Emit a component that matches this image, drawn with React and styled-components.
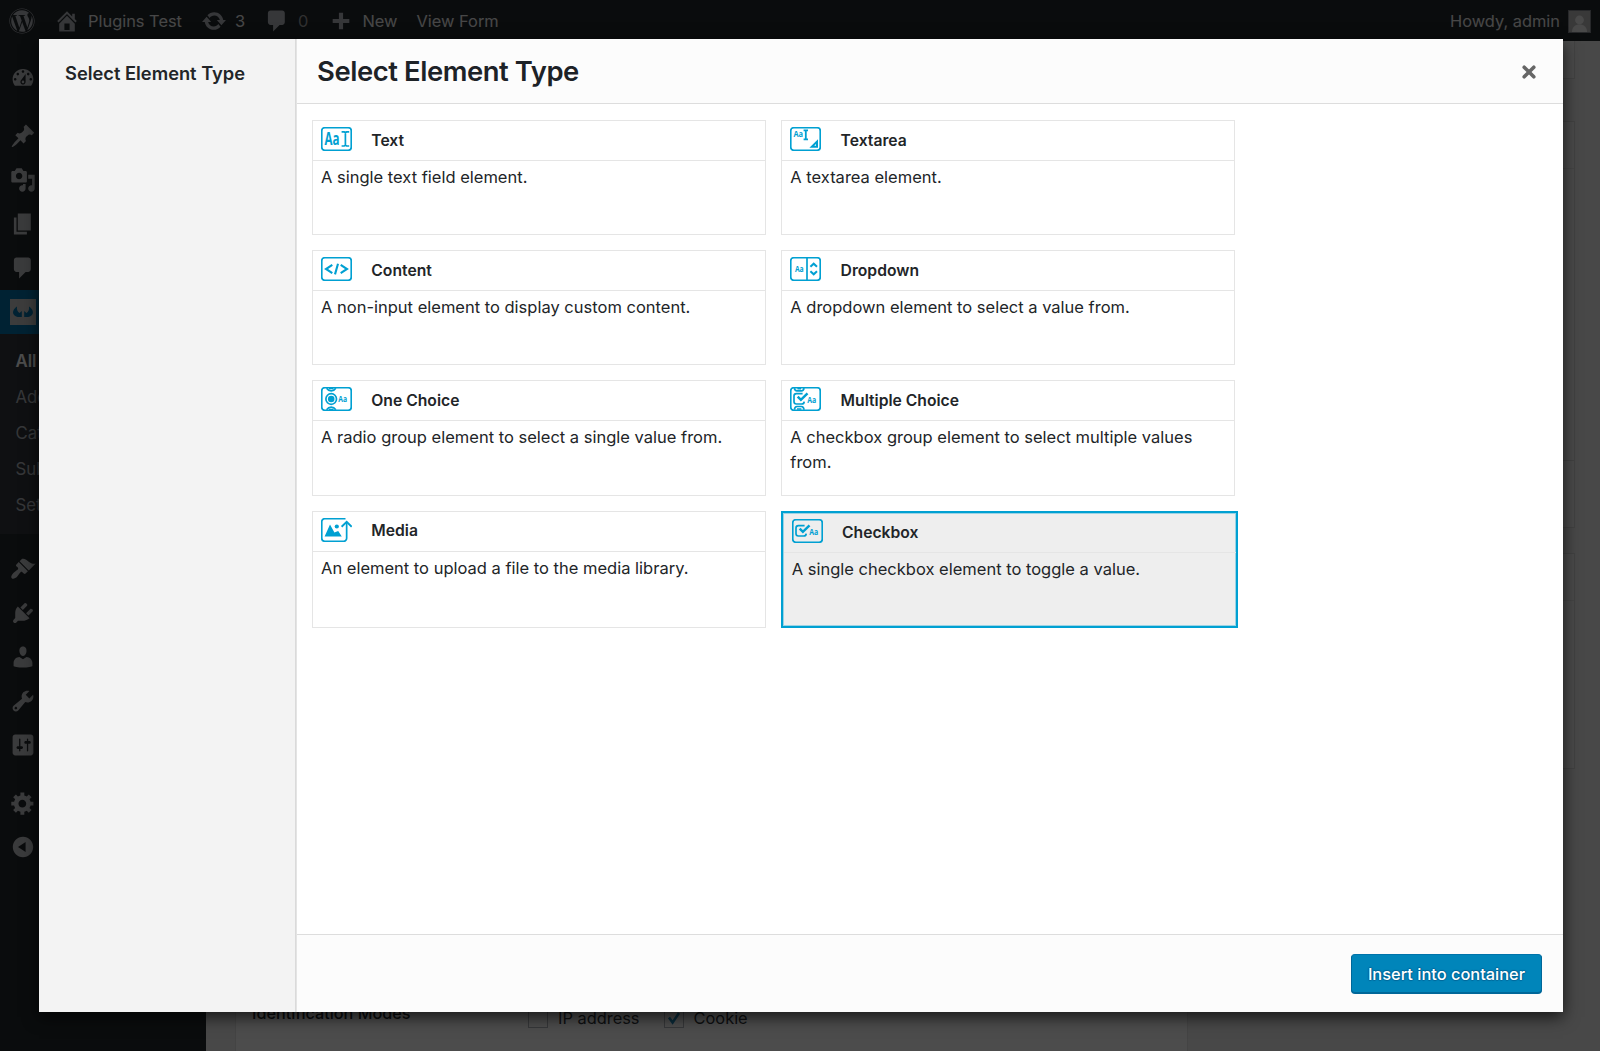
import React from "react";
import styled, { createGlobalStyle, css } from "styled-components";
import { FaWordpress } from "react-icons/fa";

const Global = createGlobalStyle`
  *, *::before, *::after { box-sizing: border-box; }
  html, body { margin: 0; padding: 0; height: 100%; overflow: hidden; }
  body {
    background: #f1f1f1;
    font-family: Inter, "Liberation Sans", sans-serif;
    font-size: 16.4px;
    color: #222528;
  }
`;

const dashicons = {
  home: "M16 8.5l1.53 1.53-1.06 1.06L10 4.6l-6.47 6.49-1.06-1.06L10 2.5l4 4v-2h2v4zm-6-2.46l6 5.99V18H4v-5.97zM12 17v-5H8v5h4z",
  update: "M10.2 3.28c3.53 0 6.43 2.61 6.92 6h2.08l-3.5 4-3.5-4h2.32c-.45-1.97-2.21-3.45-4.32-3.45-1.45 0-2.73.71-3.54 1.78L4.95 5.66C6.23 4.2 8.11 3.28 10.2 3.28zm-.4 13.44c-3.52 0-6.43-2.61-6.92-6H.8l3.5-4c1.17 1.33 2.33 2.67 3.5 4H5.48c.45 1.97 2.21 3.45 4.32 3.45 1.45 0 2.73-.71 3.54-1.78l1.71 1.95c-1.28 1.46-3.15 2.38-5.25 2.38z",
  comments: "M5 2h9c1.1 0 2 .9 2 2v7c0 1.1-.9 2-2 2h-2l-5 5v-5H5c-1.1 0-2-.9-2-2V4c0-1.1.9-2 2-2z",
  plus: "M8.4 3.6h3.2v4.8h4.8v3.2h-4.8v4.8H8.4v-4.8H3.6V8.4h4.8z",
  dashboard: "M3.76 16h12.48c1.1-1.37 1.76-3.11 1.76-5 0-4.42-3.58-8-8-8s-8 3.58-8 8c0 1.89.66 3.63 1.76 5zM10 4c.55 0 1 .45 1 1s-.45 1-1 1-1-.45-1-1 .45-1 1-1zM6 6c.55 0 1 .45 1 1s-.45 1-1 1-1-.45-1-1 .45-1 1-1zm8 0c.55 0 1 .45 1 1s-.45 1-1 1-1-.45-1-1 .45-1 1-1zm-5.37 5.55L12 7v6c0 1.1-.9 2-2 2s-2-.9-2-2c0-.57.24-1.08.63-1.45zM4 10c.55 0 1 .45 1 1s-.45 1-1 1-1-.45-1-1 .45-1 1-1zm12 0c.55 0 1 .45 1 1s-.45 1-1 1-1-.45-1-1 .45-1 1-1zm-5 3c0-.55-.45-1-1-1s-1 .45-1 1 .45 1 1 1 1-.45 1-1z",
  post: "M10.44 3.02l1.82-1.82 6.36 6.35-1.83 1.82c-1.05-.68-2.48-.57-3.41.36l-.75.75c-.92.93-1.04 2.35-.35 3.41l-1.83 1.82-2.41-2.41-2.8 2.79c-.42.42-3.38 2.71-3.8 2.29s1.86-3.39 2.28-3.81l2.79-2.79L4.1 9.36l1.83-1.82c1.05.69 2.48.57 3.4-.36l.75-.75c.93-.92 1.05-2.35.36-3.41z",
  media: "M13 11V4c0-.55-.45-1-1-1h-1.67L9 1H5L3.67 3H2c-.55 0-1 .45-1 1v7c0 .55.45 1 1 1h10c.55 0 1-.45 1-1zM7 4.5c1.38 0 2.5 1.12 2.5 2.5S8.38 9.5 7 9.5 4.5 8.38 4.5 7 5.62 4.5 7 4.5zM14 6h5v10.5c0 1.38-1.12 2.5-2.5 2.5S14 17.88 14 16.5s1.12-2.5 2.5-2.5c.17 0 .34.02.5.05V9h-3V6zm-4 8.05V13h2v3.5c0 1.38-1.12 2.5-2.5 2.5S7 17.88 7 16.5 8.12 14 9.5 14c.17 0 .34.02.5.05z",
  page: "M6 15V2h10v13H6zm-1 1h8v2H3V5h2v11z",
  appearance: "M14.48 11.06L7.41 3.99l1.5-1.5c.5-.56 2.3-.47 3.51.32 1.21.8 1.43 1.28 2.91 2.1 1.18.64 2.45 1.26 4.45.85zm-.71.71L6.7 4.7 4.93 6.47c-.39.39-.39 1.02 0 1.41l1.06 1.06c.39.39.39 1.03 0 1.42-.6.6-1.43 1.11-2.21 1.69-.35.26-.7.53-1.01.84C1.43 14.23.4 16.08 1.4 17.07c.99 1 2.84-.03 4.18-1.36.31-.31.58-.66.85-1.02.57-.78 1.08-1.61 1.69-2.21.39-.39 1.02-.39 1.41 0l1.06 1.06c.39.39 1.02.39 1.41 0z",
  plugins: "M13.11 4.36L9.87 7.6 8 5.73l3.24-3.24c.35-.34 1.05-.2 1.56.32.52.51.66 1.21.31 1.55zm-8 1.77l.91-1.12 9.01 9.01-1.19.84c-.71.71-2.63 1.16-3.82 1.16H6.14L4.9 17.26c-.59.59-1.54.59-2.12 0-.59-.58-.59-1.53 0-2.12l1.24-1.24v-3.88c0-1.13.4-3.19 1.09-3.89zm7.26 3.97l3.24-3.24c.34-.35 1.04-.21 1.55.31.52.51.66 1.21.31 1.55l-3.24 3.25z",
  users: "M10 9.25c-2.27 0-2.73-3.44-2.73-3.44C7 4.02 7.82 2 9.97 2c2.16 0 2.98 2.02 2.71 3.81 0 0-.41 3.44-2.68 3.44zm0 2.57L12.72 10c2.39 0 4.52 2.33 4.52 4.53v2.49s-3.65 1.13-7.24 1.13c-3.65 0-7.24-1.13-7.24-1.13v-2.49c0-2.25 1.94-4.48 4.47-4.48z",
  tools: "M16.68 9.77c-1.34 1.34-3.3 1.67-4.95.99l-5.41 6.52c-.99.99-2.59.99-3.58 0s-.99-2.59 0-3.57l6.52-5.42c-.68-1.65-.35-3.61.99-4.95 1.28-1.28 3.12-1.62 4.72-1.06l-2.89 2.89 2.82 2.82 2.86-2.87c.53 1.58.18 3.39-1.08 4.65zM3.81 16.21c.4.39 1.04.39 1.43 0 .4-.4.4-1.04 0-1.43-.39-.4-1.03-.4-1.43 0-.39.39-.39 1.03 0 1.43z",
  settings: "M18 16V4c0-1.1-.9-2-2-2H4c-1.1 0-2 .9-2 2v12c0 1.1.9 2 2 2h12c1.1 0 2-.9 2-2zM8 11h1c.55 0 1 .45 1 1s-.45 1-1 1H8v1.5c0 .28-.22.5-.5.5s-.5-.22-.5-.5V13H6c-.55 0-1-.45-1-1s.45-1 1-1h1V5.5c0-.28.22-.5.5-.5s.5.22.5.5V11zm5-2h-1c-.55 0-1-.45-1-1s.45-1 1-1h1V5.5c0-.28.22-.5.5-.5s.5.22.5.5V7h1c.55 0 1 .45 1 1s-.45 1-1 1h-1v5.5c0 .28-.22.5-.5.5s-.5-.22-.5-.5V9z",
  generic: "M18 12h-2.18c-.17.7-.44 1.35-.81 1.93l1.54 1.54-2.1 2.1-1.54-1.54c-.58.36-1.23.63-1.91.79V19H8v-2.18c-.68-.16-1.33-.43-1.91-.79l-1.54 1.54-2.12-2.12 1.54-1.54c-.36-.58-.63-1.23-.79-1.91H1V9.03h2.17c.16-.7.44-1.35.8-1.94L2.43 5.55l2.1-2.1 1.54 1.54c.58-.37 1.24-.64 1.93-.81V2h3v2.18c.68.16 1.33.43 1.91.79l1.54-1.54 2.12 2.12-1.54 1.54c.36.59.64 1.24.8 1.94H18V12zm-8.5 1.5c1.66 0 3-1.34 3-3s-1.34-3-3-3-3 1.34-3 3 1.34 3 3 3z",
  collapse: "M10 2.16c4.33 0 7.84 3.51 7.84 7.84s-3.51 7.84-7.84 7.84S2.16 14.33 2.16 10 5.67 2.16 10 2.16zm2 11.72V6.12L6.18 9.97z",
};

const Dashicon = ({ name, size = 26 }) => (
  <svg width={size} height={size} viewBox="0 0 20 20" fill="currentColor" fillRule="evenodd">
    <path d={dashicons[name]} />
  </svg>
);

/* ---------- Admin page behind the modal ---------- */

const Page = styled.div`
  position: relative;
  width: 1600px;
  height: 1051px;
  overflow: hidden;
  display: grid;
  grid-template: 41px 1fr / 206px 1fr;
  background: #f1f1f1;
`;

const AdminBar = styled.header`
  grid-column: 1 / -1;
  display: flex;
  align-items: center;
  padding: 1px 9px 0;
  background: #23282d;
  color: #eee;
`;

const BarItem = styled.div`
  display: flex;
  align-items: center;
  height: 40px;
  margin-left: ${(p) => p.$gap || 0}px;
  gap: ${(p) => p.$inner ?? 8}px;
  white-space: nowrap;

  svg { flex: none; color: #b4b9be; }
`;

const BarCount = styled.span`
  color: ${(p) => (p.$muted ? "#a0a0a0" : "#eee")};
`;

const Spacer = styled.div`
  flex: 1;
`;

const Avatar = styled.div`
  width: 23px;
  height: 23px;
  display: flex;
  align-items: flex-end;
  justify-content: center;
  border: 1px solid #82878c;
  background: #c0c0c0;
`;

const Menu = styled.nav`
  display: flex;
  flex-direction: column;
  padding-top: 15px;
  background: #23282d;
`;

const MenuRow = styled.div`
  display: flex;
  align-items: center;
  height: 44px;
  padding-left: 10px;
  margin-top: ${(p) => p.$gap || 0}px;
  color: #c4c6c8;
  ${(p) => p.$current && css`
    background: #0073aa;
    color: #fff;
  `}
`;

const SubMenu = styled.div`
  display: flex;
  flex-direction: column;
  height: 200px;
  padding: 9px 0 0 15.5px;
  background: #32373c;
`;

const SubItem = styled.div`
  height: 36.1px;
  line-height: 36px;
  font-size: 16.8px;
  color: ${(p) => (p.$current ? "#fff" : "#b4b9be")};
  font-weight: ${(p) => (p.$current ? 600 : 400)};
  white-space: nowrap;
`;

const Main = styled.main`
  display: grid;
  grid-template-columns: 953px 1fr;
  gap: 20px;
  padding: 0 25px 0 29px;
`;

const SideColumn = styled.div`
  display: flex;
  flex-direction: column;
`;

const Postbox = styled.section`
  height: ${(p) => p.$h}px;
  margin-top: ${(p) => p.$gap || 0}px;
  border: 1px solid #dcdcdc;
  border-top-width: ${(p) => (p.$joined ? 0 : 1)}px;
  background: #f8f8f8;
`;

const PostboxHead = styled.div`
  height: 47px;
  border-bottom: 1px solid #e6e6e6;
`;

const SettingsPanel = styled.section`
  display: flex;
  align-items: flex-start;
  padding: 960px 0 0 16px;
  border: solid #e5e5e5;
  border-width: 0 1px;
  background: #fff;
`;

const SettingLabel = styled.div`
  width: 276px;
  margin-top: 2px;
  font-weight: 500;
  font-size: 16.2px;
  color: #23282d;
`;

const CheckOption = styled.label`
  display: flex;
  align-items: center;
  gap: 10px;
  margin: 7px 24px 0 0;
  color: #32373c;
`;

const CheckSquare = styled.span`
  display: flex;
  width: 20px;
  height: 20px;
  border: 1px solid #b4b9be;
  color: #1e8cbe;
`;

const Backdrop = styled.div`
  position: absolute;
  inset: 0;
  background: rgba(0, 0, 0, 0.7);
`;

/* ---------- Modal ---------- */

const Modal = styled.div`
  position: absolute;
  inset: 39px 37px 39px 39px;
  display: grid;
  grid-template: minmax(0, 1fr) / 257px 1fr;
  background: #fcfcfc;
  box-shadow: 0 5px 15px rgba(0, 0, 0, 0.7);
`;

const ModalMenu = styled.aside`
  padding: 22px 26px;
  background: #f3f3f3;
  border-right: 1px solid #dadada;
  box-shadow: 1px 0 0 #e4e4e4;
`;

const MenuTitle = styled.h2`
  margin: 0;
  font-size: 18.3px;
  line-height: 24px;
  font-weight: 600;
  white-space: nowrap;
`;

const ModalBody = styled.div`
  display: flex;
  flex-direction: column;
  min-width: 0;
  margin-left: 1px;
`;

const ModalHeader = styled.header`
  display: flex;
  align-items: center;
  justify-content: space-between;
  height: 65px;
  padding: 0 27px 0 20px;
  border-bottom: 1px solid #ddd;
`;

const ModalTitle = styled.h1`
  margin: 0;
  font-size: 27.4px;
  line-height: 36px;
  font-weight: 600;
  letter-spacing: -0.42px;
  color: #1d2227;
`;

const CloseButton = styled.button`
  display: flex;
  margin-top: 2px;
  padding: 0;
  border: 0;
  background: none;
  color: #666;
`;

const ModalContent = styled.div`
  flex: 1;
  padding: 16px 15px;
  background: #fff;
`;

const CardGrid = styled.div`
  display: grid;
  grid-template-columns: 454px 454px;
  grid-template-rows: repeat(3, 115.2px) 117px;
  gap: 15px 15.3px;
`;

const Card = styled.article`
  display: flex;
  flex-direction: column;
  border: 1px solid #e5e5e5;
  background: #fff;
  ${(p) => p.$selected && css`
    width: 457px;
    padding: 0.4px;
    border: 2px solid #00a0d2;
    box-shadow: inset 0 0 0 1px rgba(0, 160, 210, 0.35);
    background: #eee;
  `}
`;

const CardHead = styled.div`
  display: flex;
  align-items: center;
  gap: 19.3px;
  height: 40px;
  padding: 0 8px 3px;
  border-bottom: 1px solid #e5e5e5;
`;

const CardTitle = styled.h3`
  margin: 3.4px 0 0;
  font-size: 15.7px;
  line-height: 22px;
  font-weight: 600;
`;

const CardText = styled.p`
  margin: 0;
  padding: 4px 8px;
  font-size: 16.5px;
  line-height: 24.5px;
`;

const ModalFooter = styled.footer`
  display: flex;
  align-items: center;
  justify-content: flex-end;
  height: 78px;
  padding: 0 21px 0 0;
  border-top: 1px solid #ddd;
`;

const PrimaryButton = styled.button`
  width: 191px;
  height: 39px;
  padding: 0;
  border: 1px solid #0073aa;
  border-color: #0073aa #006799 #006799;
  border-radius: 4px;
  background: #0085ba;
  box-shadow: 0 1px 0 #006799;
  color: #fff;
  font: 500 16.4px Inter, "Liberation Sans", sans-serif;
  text-shadow: 0 -1px 1px #006799, 1px 0 1px #006799, 0 1px 1px #006799, -1px 0 1px #006799;
`;

/* ---------- Element type glyphs ---------- */

const GlyphText = styled.text`
  font-family: "Open Sans", "Noto Sans", sans-serif;
  font-weight: 700;
  fill: #00a0d2;
  stroke: none;
`;

const Aa = ({ x, y, size, width }) => (
  <GlyphText x={x} y={y} fontSize={size} textLength={width} lengthAdjust="spacingAndGlyphs">Aa</GlyphText>
);

const Frame = () => <rect x="0.75" y="0.75" width="29.5" height="22.5" rx="3" />;

const CheckMark = () => (
  <>
    <path d="M12.6 6.6H6.4a2.4 2.4 0 0 0-2.4 2.4v5.6A2.4 2.4 0 0 0 6.4 17h5.2a2.6 2.6 0 0 0 2.6-2.4" />
    <path d="M7.7 9.6l3.2 3.2 6.6-6.4" strokeWidth="2.5" />
  </>
);

const glyphs = {
  text: (
    <>
      <Frame />
      <Aa x="3.6" y="18.2" size="17" width="15" />
      <path d="M20.6 4.9h2.6l1.2.7 1.2-.7h2.6M24.4 5.4v13M20.6 19h2.6l1.2-.7 1.2.7h2.6" />
    </>
  ),
  textarea: (
    <>
      <Frame />
      <Aa x="3.5" y="10.4" size="8.4" width="9.6" />
      <path d="M13.6 3.4h4.4M15.8 3.4v9M13.6 12.4h4.4" strokeWidth="1.8" />
      <path d="M27 14.6v5.2h-5.2z" strokeWidth="2" />
    </>
  ),
  content: (
    <>
      <Frame />
      <path d="M11.3 7.9L5 12l6.3 4.1M19.7 7.9L26 12l-6.3 4.1M17 6.8L14 17.4" strokeWidth="2.1" />
    </>
  ),
  dropdown: (
    <>
      <Frame />
      <path d="M17 1v22" />
      <path d="M20.4 9.8l3.3-3.1 3.3 3.1M20.4 14.2l3.3 3.1 3.3-3.1" strokeWidth="2" />
      <Aa x="4.9" y="15.4" size="9" width="8.8" />
    </>
  ),
  radio: (
    <>
      <Frame />
      <circle cx="10.2" cy="12" r="5.3" />
      <circle cx="10.2" cy="12" r="3.3" fill="#00a0d2" stroke="none" />
      <path d="M5.6 1.2c1.2 1.8 2.8 2.7 4.6 2.7s3.4-.9 4.6-2.7M5.6 22.8c1.2-1.8 2.8-2.7 4.6-2.7s3.4.9 4.6 2.7M8 1.4h4.4M8 22.6h4.4" />
      <Aa x="17.3" y="15" size="9" width="8.8" />
    </>
  ),
  checks: (
    <>
      <Frame />
      <CheckMark />
      <path d="M4.4 1.2c.2 1.8 1.2 2.7 2.6 2.7h4.4c1.4 0 2.4-.9 2.6-2.7M4.4 22.8c.2-2.4 1.2-3.3 2.6-3.3h4.4c1.4 0 2.4.9 2.6 3.3M7.4 1.6h3.6M7 22h4.4" />
      <Aa x="17.2" y="15.9" size="9" width="9" />
    </>
  ),
  checkbox: (
    <>
      <Frame />
      <CheckMark />
      <Aa x="17.2" y="15.9" size="9" width="9" />
    </>
  ),
  media: (
    <>
      <path d="M24.5.75H3.75a3 3 0 0 0-3 3v16.5a3 3 0 0 0 3 3h18.9a3 3 0 0 0 3-3V4" />
      <path d="M20.6 8.7l5.1-4.9 5 4.9" strokeWidth="1.9" />
      <path d="M3.6 18.6L9 6.6l4.4 8 3.8-1.6 3.6 5.6z" fill="#00a0d2" stroke="none" />
      <circle cx="15.8" cy="8.5" r="2.1" fill="#00a0d2" stroke="none" />
    </>
  ),
};

const ElementGlyph = ({ name }) => (
  <svg width="31" height="24" viewBox="0 0 31 24" fill="none" stroke="#00a0d2" strokeWidth="1.7">
    {glyphs[name]}
  </svg>
);

const elements = [
  { icon: "text", title: "Text", text: "A single text field element." },
  { icon: "textarea", title: "Textarea", text: "A textarea element." },
  { icon: "content", title: "Content", text: "A non-input element to display custom content." },
  { icon: "dropdown", title: "Dropdown", text: "A dropdown element to select a value from." },
  { icon: "radio", title: "One Choice", text: "A radio group element to select a single value from." },
  { icon: "checks", title: "Multiple Choice", text: "A checkbox group element to select multiple values from." },
  { icon: "media", title: "Media", text: "An element to upload a file to the media library." },
  { icon: "checkbox", title: "Checkbox", text: "A single checkbox element to toggle a value.", selected: true },
];

export default function App() {
  return (
    <Page>
      <Global />
      <AdminBar>
        <BarItem><FaWordpress size={26} /></BarItem>
        <BarItem $gap={19}><Dashicon name="home" />Plugins Test</BarItem>
        <BarItem $gap={19} $inner={8}><Dashicon name="update" /><BarCount>3</BarCount></BarItem>
        <BarItem $gap={19} $inner={8}><Dashicon name="comments" /><BarCount $muted>0</BarCount></BarItem>
        <BarItem $gap={20}><Dashicon name="plus" />New</BarItem>
        <BarItem $gap={19}>View Form</BarItem>
        <Spacer />
        <BarItem>
          Howdy, admin
          <Avatar>
            <svg width="17" height="18" viewBox="0 0 17 18" fill="#f4f4f4">
              <circle cx="8.5" cy="6" r="4.4" />
              <path d="M1 18c0-5 3-7.5 7.5-7.5S16 13 16 18z" />
            </svg>
          </Avatar>
        </BarItem>
      </AdminBar>
      <Menu>
        <MenuRow><Dashicon name="dashboard" /></MenuRow>
        <MenuRow $gap={14}><Dashicon name="post" /></MenuRow>
        <MenuRow><Dashicon name="media" /></MenuRow>
        <MenuRow><Dashicon name="page" /></MenuRow>
        <MenuRow><Dashicon name="comments" /></MenuRow>
        <MenuRow $current>
          <svg width="26" height="26" viewBox="0 0 26 26">
            <rect width="26" height="26" fill="#c8c8c8" />
            <path d="M7 7.5c-3 2-4.6 5-3.6 7.5 1.5 3 5 3.3 8.4 3V12L9.6 14C7.6 13 6.500 10.500 7 7.500zM19 7.500c3 2 4.600 5 3.600 7.500-1.500 3-5 3.300-8.400 3V12l2.200 2c2-1 3.100-3.500 2.600-6.500z" fill="#0073aa" />
          </svg>
        </MenuRow>
        <SubMenu>
          <SubItem $current>All Forms</SubItem>
          <SubItem>Add New</SubItem>
          <SubItem>Categories</SubItem>
          <SubItem>Submissions</SubItem>
          <SubItem>Settings</SubItem>
        </SubMenu>
        <MenuRow $gap={13}><Dashicon name="appearance" /></MenuRow>
        <MenuRow><Dashicon name="plugins" /></MenuRow>
        <MenuRow><Dashicon name="users" /></MenuRow>
        <MenuRow><Dashicon name="tools" /></MenuRow>
        <MenuRow><Dashicon name="settings" /></MenuRow>
        <MenuRow $gap={14}><Dashicon name="generic" /></MenuRow>
        <MenuRow><Dashicon name="collapse" /></MenuRow>
      </Menu>
      <Main>
        <SettingsPanel>
          <SettingLabel>Identification Modes</SettingLabel>
          <CheckOption><CheckSquare />IP address</CheckOption>
          <CheckOption>
            <CheckSquare>
              <svg width="18" height="18" viewBox="0 0 18 18" fill="none" stroke="currentColor" strokeWidth="2.6">
                <path d="M4 8.5l3.6 5L14 4" />
              </svg>
            </CheckSquare>
            Cookie
          </CheckOption>
        </SettingsPanel>
        <SideColumn>
          <Postbox $h={38} $joined />
          <Postbox $h={340} $gap={42}><PostboxHead /></Postbox>
          <Postbox $h={67} $joined />
          <Postbox $h={216} $gap={25}><PostboxHead /></Postbox>
        </SideColumn>
      </Main>
      <Backdrop />
      <Modal role="dialog">
        <ModalMenu>
          <MenuTitle>Select Element Type</MenuTitle>
        </ModalMenu>
        <ModalBody>
          <ModalHeader>
            <ModalTitle>Select Element Type</ModalTitle>
            <CloseButton aria-label="Close">
              <svg width="14" height="14" viewBox="0 0 14 14" fill="none" stroke="currentColor" strokeWidth="3.6" strokeLinecap="round">
                <path d="M2.2 2.2l9.6 9.6M11.8 2.2l-9.6 9.6" />
              </svg>
            </CloseButton>
          </ModalHeader>
          <ModalContent>
            <CardGrid>
              {elements.map((el) => (
                <Card key={el.title} $selected={el.selected}>
                  <CardHead>
                    <ElementGlyph name={el.icon} />
                    <CardTitle>{el.title}</CardTitle>
                  </CardHead>
                  <CardText>{el.text}</CardText>
                </Card>
              ))}
            </CardGrid>
          </ModalContent>
          <ModalFooter>
            <PrimaryButton>Insert into container</PrimaryButton>
          </ModalFooter>
        </ModalBody>
      </Modal>
    </Page>
  );
}
